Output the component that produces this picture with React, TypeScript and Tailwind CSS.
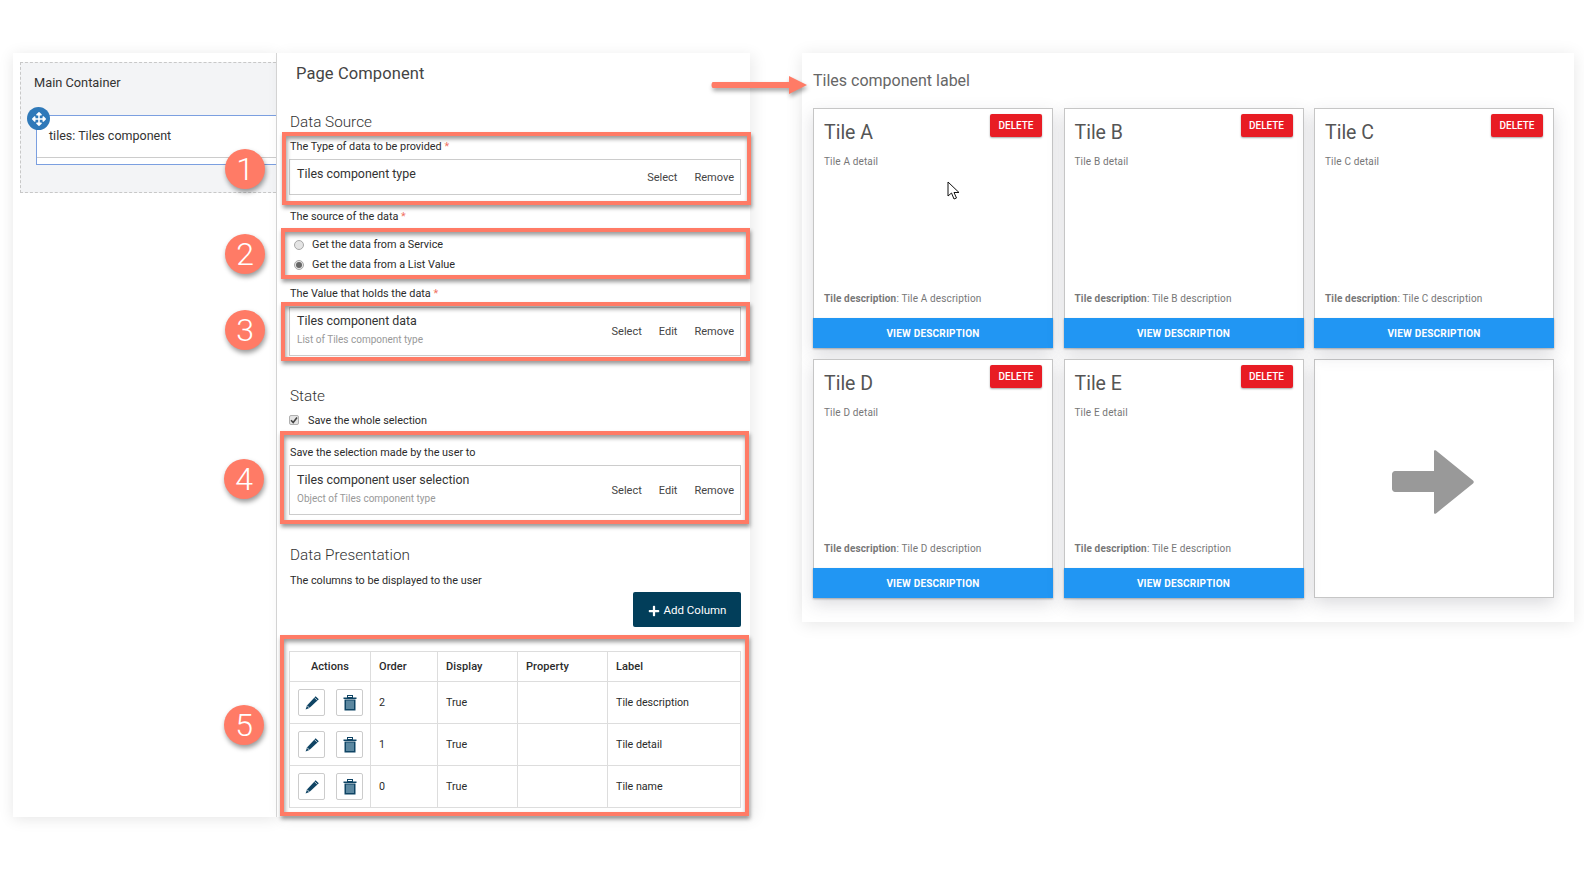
import { FaArrowsAlt, FaPlus } from 'react-icons/fa';

const PencilIcon = () => (
  <svg width="16" height="16" viewBox="0 0 16 16" className="block">
    <path d="M11.6 1.2 14.8 4.2 5.4 13 1.6 14.6 3 10.6Z" fill="#0f4464" />
    <path d="M3 10.6 5.4 13" stroke="#ffffff" strokeWidth="0.8" />
    <path d="M10.4 2.6 13.4 5.4" stroke="#ffffff" strokeWidth="0.7" />
  </svg>
);

const TrashIcon = () => (
  <svg width="14" height="16" viewBox="0 0 14 16" className="block">
    <rect x="4.5" y="0.5" width="5" height="2" fill="none" stroke="#0f4464" />
    <rect x="0.5" y="2.5" width="13" height="1.5" fill="#0f4464" />
    <rect x="1.5" y="4.5" width="11" height="11" fill="#0f4464" />
    <path d="M4 5.5v8.5M6 5.5v8.5M8 5.5v8.5M10 5.5v8.5" stroke="#a9cbdc" strokeWidth="1" />
  </svg>
);

const Label = ({ text, required, className = '' }: { text: string; required?: boolean; className?: string }) => (
  <div className={`ml-px h-[14px] text-[10.85px] leading-[16px] text-[#2b2b2b] ${className}`}>
    {text}
    {required && <span className="text-[#f0715f]"> *</span>}
  </div>
);

const Heading = ({ text, className = '' }: { text: string; className?: string }) => (
  <div className={`ml-px h-5 text-[15.3px] leading-[22px] font-light text-[#333] ${className}`}>{text}</div>
);

const Field = ({
  title,
  sub,
  actions,
  className,
  textClass,
}: {
  title: string;
  sub?: string;
  actions: string[];
  className: string;
  textClass: string;
}) => (
  <div className={`flex items-center justify-between border border-[#cccccc] pr-[6px] pl-[7px] ${className}`}>
    <div className={`self-start ${textClass}`}>
      <div className="h-[18px] text-[12.4px] leading-[18px] text-[#333]">{title}</div>
      {sub && <div className="mt-px h-[18px] text-[10px] leading-[18px] text-[#999]">{sub}</div>}
    </div>
    <div className="flex gap-[17px] pt-[2px] text-[11px] text-[#444]">
      {actions.map((a) => (
        <span key={a}>{a}</span>
      ))}
    </div>
  </div>
);

const Radio = ({ checked, text }: { checked?: boolean; text: string }) => (
  <div className="flex h-5 items-center">
    <div className="ml-[5px] flex size-[10px] items-center justify-center rounded-full border border-[#a8a8a8] bg-[#e4e4e4]">
      {checked && <div className="size-[6px] rounded-full bg-[#666]" />}
    </div>
    <span className="ml-[8px] text-[10.85px] text-[#2b2b2b]">{text}</span>
  </div>
);

const columns = [
  { order: '2', label: 'Tile description' },
  { order: '1', label: 'Tile detail' },
  { order: '0', label: 'Tile name' },
];

const ColumnsTable = () => (
  <table className="mt-6 w-[451px] table-fixed border-collapse text-[10.7px] text-[#2b2b2b]">
    <colgroup>
      <col className="w-[81px]" />
      <col className="w-[67px]" />
      <col className="w-[80px]" />
      <col className="w-[90px]" />
      <col className="w-[133px]" />
    </colgroup>
    <thead>
      <tr className="h-[30px] text-[11px]">
        <th className="border border-[#dddddd] pt-[2px] text-center font-medium tracking-[0.1px]">Actions</th>
        <th className="border border-[#dddddd] pt-[2px] pl-2 text-left font-medium tracking-[0.1px]">Order</th>
        <th className="border border-[#dddddd] pt-[2px] pl-2 text-left font-medium tracking-[0.1px]">Display</th>
        <th className="border border-[#dddddd] pt-[2px] pl-2 text-left font-medium tracking-[0.1px]">Property</th>
        <th className="border border-[#dddddd] pt-[2px] pl-2 text-left font-medium tracking-[0.1px]">Label</th>
      </tr>
    </thead>
    <tbody>
      {columns.map((c) => (
        <tr key={c.order} className="h-[42px]">
          <td className="border border-[#dddddd] pl-2">
            <div className="flex gap-[11px]">
              <div className="flex size-[27px] items-center justify-center rounded-[2px] border border-[#cccccc]">
                <PencilIcon />
              </div>
              <div className="flex size-[27px] items-center justify-center rounded-[2px] border border-[#cccccc]">
                <TrashIcon />
              </div>
            </div>
          </td>
          <td className="border border-[#dddddd] pt-[2px] pl-2">{c.order}</td>
          <td className="border border-[#dddddd] pt-[2px] pl-2">True</td>
          <td className="border border-[#dddddd] pl-2"></td>
          <td className="border border-[#dddddd] pt-[2px] pl-2">{c.label}</td>
        </tr>
      ))}
    </tbody>
  </table>
);

const tiles = ['A', 'B', 'C', 'D', 'E'];

const Tile = ({ name }: { name: string }) => (
  <div className="relative flex flex-col border border-[#c6c6c6] bg-white shadow-[0_6px_16px_rgba(60,60,80,0.18)]">
    <div className="flex items-start justify-between pt-[5px] pr-[10px] pl-[10px]">
      <div className="mt-[5px] text-[19.5px] leading-[28px] text-[#555]">Tile {name}</div>
      <div className="flex h-[23px] w-[52px] items-center justify-center rounded-[2px] bg-[#e81c24] text-[10px] font-medium text-white shadow-[0_1px_2px_rgba(0,0,0,0.35)]">
        DELETE
      </div>
    </div>
    <div className="mt-[8px] pl-[10px] text-[10px] leading-[14px] tracking-[0.15px] text-[#777]">Tile {name} detail</div>
    <div className="mt-auto pb-[12px] pl-[10px] text-[10px] leading-[14px] tracking-[0.15px] text-[#777]">
      <span className="font-bold">Tile description</span>: Tile {name} description
    </div>
    <div className="-mx-px -mb-px flex h-[30px] items-center justify-center bg-[#2196f3] text-[10px] font-bold tracking-[0.2px] text-white shadow-[0_1px_2px_rgba(0,0,0,0.3)]">
      VIEW DESCRIPTION
    </div>
  </div>
);

const badgeClass =
  'absolute z-20 flex size-10 items-center justify-center rounded-full bg-[#ff7b66] text-[32px] font-light text-white shadow-[1px_3px_5px_rgba(0,0,0,0.4)]';
const boxClass =
  'absolute z-20 border-4 border-[#ff7b66] shadow-[1px_3px_4px_rgba(0,0,0,0.4),inset_1px_3px_4px_rgba(0,0,0,0.4)]';

export default function App() {
  return (
    <div className="relative flex h-[883px] items-start overflow-hidden bg-white pt-[53px] pl-[13px] font-['Roboto',sans-serif]">
      {/* Tree panel */}
      <div className="h-[764px] w-[264px] border-r border-[#d8d8d8] bg-white pt-[9px] pl-[7px] shadow-[0_2px_14px_rgba(0,0,0,0.1)]">
        <div className="relative h-[131px] border-y border-l border-dashed border-[#c8c8c8] bg-[#f3f4f6] pt-[10px] pl-[13px]">
          <div className="text-[12.8px] leading-5 text-[#333]">Main Container</div>
          <div className="mt-[22px] ml-[2px] h-[50px] border-y border-l border-[#7b9fe0] bg-white">
            <div className="h-[42px] border-b border-[#cccccc]">
              <div className="pt-[10px] pl-[12px] text-[12.5px] leading-5 text-[#333]">tiles: Tiles component</div>
            </div>
          </div>
          <div className="absolute top-[44px] left-[6px] flex size-[23px] items-center justify-center rounded-full bg-[#2f79b9] text-white">
            <FaArrowsAlt size={14} />
          </div>
        </div>
      </div>

      {/* Page component settings */}
      <div className="relative z-10 flex h-[764px] w-[473px] flex-col bg-white pt-[10px] pr-[9px] pl-[12px] shadow-[4px_2px_14px_rgba(0,0,0,0.08)]">
        <div className="ml-[7px] h-5 text-[16.5px] leading-[22px] tracking-[0.1px] text-[#444]">Page Component</div>
        <Heading text="Data Source" className="mt-[28px]" />
        <Label text="The Type of data to be provided" required className="mt-2" />
        <Field title="Tiles component type" actions={['Select', 'Remove']} className="mt-[6px] h-9" textClass="pt-[5px]" />
        <Label text="The source of the data" required className="mt-[14px]" />
        <div className="mt-3">
          <Radio text="Get the data from a Service" />
          <Radio checked text="Get the data from a List Value" />
        </div>
        <Label text="The Value that holds the data" required className="mt-[11px]" />
        <Field
          title="Tiles component data"
          sub="List of Tiles component type"
          actions={['Select', 'Edit', 'Remove']}
          className="mt-[7px] h-[49px]"
          textClass="pt-[4px]"
        />
        <Heading text="State" className="mt-[29px] mb-px" />
        <div className="mt-[7px] flex h-[14px] items-center">
          <div className="flex size-[10px] items-center justify-center rounded-[2px] border border-[#b0b0b0] bg-[#e4e4e4] text-[#444]">
            <svg width="8" height="8" viewBox="0 0 8 8">
              <path d="M1 4.2 3.2 6.5 7 1.5" fill="none" stroke="currentColor" strokeWidth="1.6" />
            </svg>
          </div>
          <span className="ml-[9px] pt-[2px] text-[10.85px] text-[#2b2b2b]">Save the whole selection</span>
        </div>
        <Label text="Save the selection made by the user to" className="mt-[18px]" />
        <Field
          title="Tiles component user selection"
          sub="Object of Tiles component type"
          actions={['Select', 'Edit', 'Remove']}
          className="mt-[6px] h-[50px]"
          textClass="pt-[5px]"
        />
        <Heading text="Data Presentation" className="mt-[29px] mb-px" />
        <Label text="The columns to be displayed to the user" className="mt-2" />
        <div className="mt-[5px] flex h-[35px] w-[108px] items-center justify-center gap-[4px] self-end rounded-[2px] bg-[#023e5a] pt-[2px] text-[11.5px] text-white">
          <FaPlus size={12} />
          Add Column
        </div>
        <ColumnsTable />
      </div>

      {/* Rendered tiles */}
      <div className="ml-[52px] h-[569px] w-[772px] bg-white px-[11px] shadow-[0_2px_16px_rgba(0,0,0,0.1)]">
        <div className="flex h-[55px] items-center text-[16px] text-[#666]">Tiles component label</div>
        <div className="grid grid-cols-[240px_240px_240px] grid-rows-[240px_239px] gap-x-[10.5px] gap-y-[11px]">
          {tiles.map((t) => (
            <Tile key={t} name={t} />
          ))}
          <div className="flex items-center justify-center border border-[#c6c6c6] bg-white shadow-[0_6px_16px_rgba(60,60,80,0.18)]">
            <svg width="82" height="66" viewBox="0 0 82 66" className="mt-[7px] -ml-[3px]">
              <path
                d="M3 22H42V2C42 1 43 1 44 1.6L81 31.5C82 32.5 82 33.5 81 34.5L44 64.4C43 65 42 65 42 64V43H3C1.5 43 0 41.5 0 40V25C0 23.5 1.5 22 3 22Z"
                fill="#999999"
              />
            </svg>
          </div>
        </div>
      </div>

      {/* Annotations */}
      <div className={`${boxClass} top-[132px] left-[282px] h-[73px] w-[469px]`} />
      <div className={`${boxClass} top-[228px] left-[281px] h-[51px] w-[469px]`} />
      <div className={`${boxClass} top-[302px] left-[281px] h-[59px] w-[469px]`} />
      <div className={`${boxClass} top-[431px] left-[280px] h-[93px] w-[469px]`} />
      <div className={`${boxClass} top-[635px] left-[280px] h-[181px] w-[469px]`} />
      <div className={`${badgeClass} top-[149px] left-[225px]`}>1</div>
      <div className={`${badgeClass} top-[234px] left-[225px]`}>2</div>
      <div className={`${badgeClass} top-[310px] left-[225px]`}>3</div>
      <div className={`${badgeClass} top-[459px] left-[224px]`}>4</div>
      <div className={`${badgeClass} top-[705px] left-[224px]`}>5</div>

      <svg width="100" height="22" viewBox="0 0 100 22" className="absolute top-[74px] left-[710px] z-20 drop-shadow-[1px_3px_2px_rgba(0,0,0,0.35)]">
        <path d="M3 8H79V2L97 11 79 20V14H3C1 14 1 8 3 8Z" fill="#ff7b66" />
      </svg>

      <svg width="14" height="20" viewBox="0 0 14 20" className="absolute top-[181px] left-[947px] z-20">
        <path d="M1 1V15L4.5 12 7 18 9.5 17 7 11.5H12Z" fill="#fff" stroke="#111" strokeWidth="1" strokeLinejoin="round" />
      </svg>
    </div>
  );
}
